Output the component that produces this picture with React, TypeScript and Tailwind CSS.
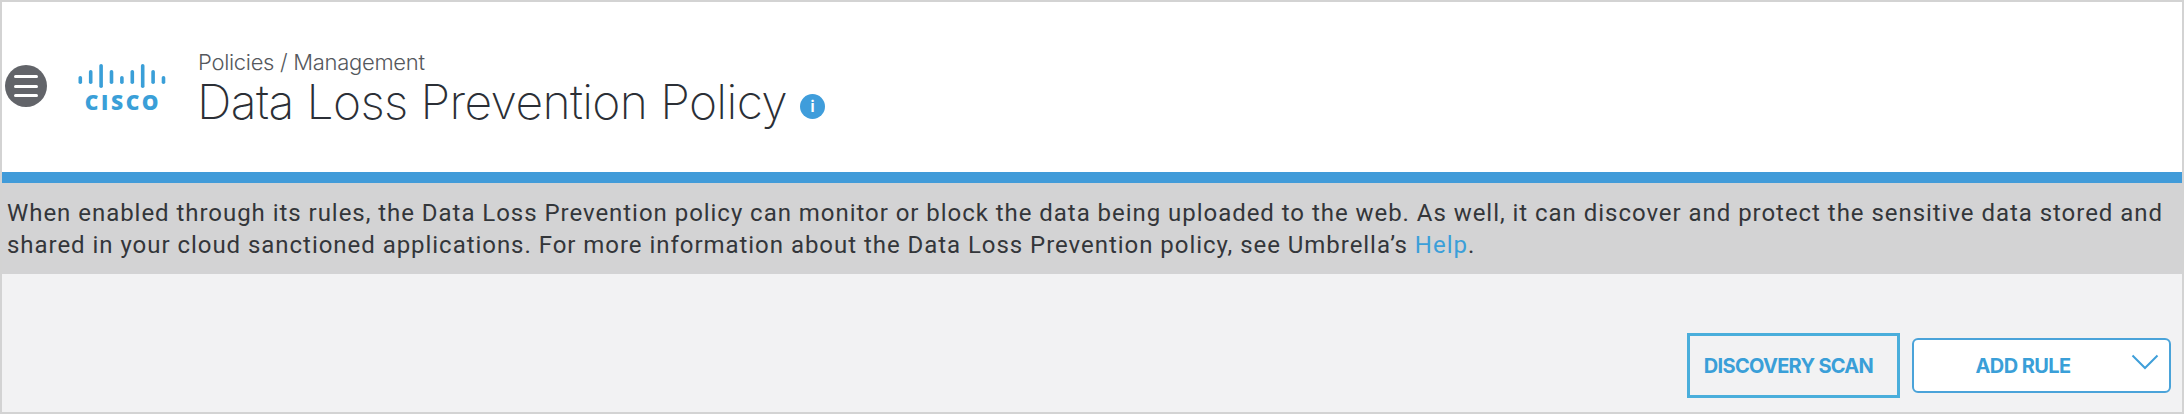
export default function App() {
  const bars: [number, number, number][] = [
    [2.5, 13, 8], [12.9, 7, 14], [23.3, 1, 24], [33.7, 7, 14], [44.1, 13, 8],
    [54.5, 7, 14], [64.9, 1, 24], [75.3, 7, 14], [85.7, 13, 8],
  ];
  return (
    <div className="w-[2184px] h-[414px] border-2 border-[#d3d3d3] bg-[#f2f2f3] flex flex-col overflow-hidden font-['Inter',sans-serif]">
      <header className="h-[170px] shrink-0 bg-white flex items-start">
        <button className="mt-[63px] ml-[3px] w-[42px] h-[42px] rounded-full bg-[#626469] flex flex-col items-center justify-center gap-[6.5px] shrink-0">
          <span className="block w-[24px] h-[3px] bg-white rounded-full" />
          <span className="block w-[24px] h-[3px] bg-white rounded-full" />
          <span className="block w-[24px] h-[3px] bg-white rounded-full" />
        </button>
        <div className="mt-[61px] ml-[29px] w-[90px] flex flex-col items-center shrink-0">
          <svg width="90" height="27" viewBox="0 0 90 27" className="block">
            {bars.map(([x, y, h], i) => (
              <rect key={i} x={x} y={y} width="3.6" height={h} rx="1.8" fill="#3a9fd8" />
            ))}
          </svg>
          <span className="pl-[4px] text-[21px] leading-[24px] font-extrabold tracking-[2.6px] text-[#3a9fd8] font-['Open_Sans',sans-serif]">CISCO</span>
        </div>
        <div className="ml-[31px] mt-[46px]">
          <div className="ml-[1px] text-[22px] leading-[28px] font-light text-[#55585d] tracking-[-0.3px]">Policies / Management</div>
          <div className="flex items-center -mt-[3px]">
            <h1 className="text-[48px] leading-[58px] font-extralight text-[#2b2f36] tracking-[-0.64px]">Data Loss Prevention Policy</h1>
            <span className="ml-[13px] mt-[8px] w-[25px] h-[25px] rounded-full bg-[#3f9ddb] text-white text-[15px] leading-none font-bold flex items-center justify-center">i</span>
          </div>
        </div>
      </header>
      <div className="h-[11px] shrink-0 bg-[#419bd9]" />
      <p className="h-[91px] shrink-0 bg-[#d3d3d4] px-[5px] pt-[14px] text-[24px] leading-[32px] tracking-[0.96px] text-[#33363a] font-['Roboto',sans-serif]">
        When enabled through its rules, the Data Loss Prevention policy can monitor or block the data being uploaded to the web. As well, it can discover and protect the sensitive data stored and shared in your cloud sanctioned applications. For more information about the Data Loss Prevention policy, see Umbrella’s <span className="text-[#3b9fd9]">Help</span>.
      </p>
      <div className="flex-1 flex justify-end items-start gap-[12px] pr-[11px] pt-[59px]">
        <button className="w-[213px] h-[65px] pr-[10px] border-[3px] border-[#4aaedb] text-[#3a9fd8] text-[20px] font-bold tracking-[-0.7px]">DISCOVERY SCAN</button>
        <button className="relative w-[259px] h-[55px] mt-[5px] bg-white border-2 border-[#4aa3d9] rounded-[6px] text-[#3a9fd8] text-[20px] font-bold tracking-[-0.6px]">
          <span className="block pr-[37px]">ADD RULE</span>
          <svg width="28" height="16" viewBox="0 0 28 16" fill="none" className="absolute right-[10px] top-[14px]">
            <path d="M1.5 1.5 L14 14 L26.5 1.5" stroke="#3f9fd9" strokeWidth="2" />
          </svg>
        </button>
      </div>
    </div>
  );
}
